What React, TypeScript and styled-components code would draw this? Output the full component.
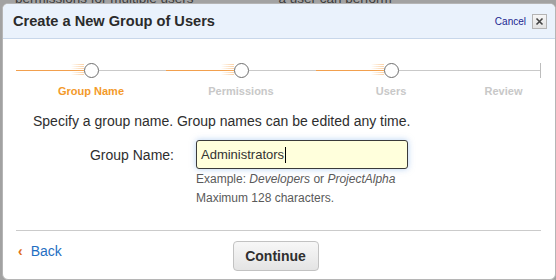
import React, { FC } from 'react';
import styled, { createGlobalStyle } from 'styled-components';

const GlobalStyle = createGlobalStyle`
  html, body {
    margin: 0;
    padding: 0;
    background: #a2a2a2;
    overflow: hidden;
  }
  body {
    font-family: 'Liberation Sans', Arial, sans-serif;
    width: 556px;
    height: 280px;
  }
`;

const Backdrop = styled.div`
  display: flex;
  gap: 85px;
  margin-top: -9px;
  padding-left: 15px;
  font-size: 13.5px;
  line-height: 15px;
  color: #3c3c3c;
  white-space: nowrap;
`;

const Dialog = styled.div`
  position: absolute;
  left: 2px;
  top: 3px;
  width: 552px;
  height: 275px;
  background: #fff;
  border: 1px solid #b5b5b5;
  border-radius: 6px;
  overflow: hidden;
  display: flex;
  flex-direction: column;
`;

const Header = styled.div`
  height: 34px;
  display: flex;
  align-items: center;
  justify-content: space-between;
  padding: 0 8px 0 10px;
  background: #eaf2fc;
  border-bottom: 1px solid #c8d7ea;
`;

const Title = styled.h1`
  margin: 0;
  font-size: 14.6px;
  font-weight: bold;
  color: #2b2b2b;
`;

const CancelWrap = styled.div`
  display: flex;
  align-items: center;
  gap: 6px;
`;

const CancelLink = styled.a`
  font-size: 10px;
  color: #1c2690;
  text-decoration: none;
`;

const CloseBox = styled.span`
  width: 13px;
  height: 13px;
  border: 1px solid #b4b4b4;
  background: linear-gradient(#f6f6f6, #e2e2e2);
  display: flex;
  align-items: center;
  justify-content: center;
`;

const Body = styled.div`
  padding: 0 14px 0 13px;
  display: flex;
  flex-direction: column;
`;

const Steps = styled.div`
  display: flex;
  margin-top: 24px;
`;

const Step = styled.div<{ $w: number }>`
  width: ${(p) => p.$w}px;
  display: flex;
  flex-direction: column;
  align-items: center;
`;

const Track = styled.div<{ $end?: boolean }>`
  width: 100%;
  height: 15px;
  display: flex;
  align-items: center;
  box-sizing: border-box;
  border-right: ${(p) => (p.$end ? '1px solid #bdbdbd' : 'none')};
`;

const Segment = styled.span<{ $lit: boolean }>`
  flex: 1;
  height: 1px;
  margin-top: -1px;
  background: ${(p) => (p.$lit ? '#f2a04e' : '#c9c9c9')};
`;

const Glow = styled.span`
  width: 13px;
  height: 12px;
  margin-left: -13px;
  margin-top: -1px;
  background: repeating-linear-gradient(
    to bottom,
    rgba(246, 170, 90, 0.5) 0,
    rgba(246, 170, 90, 0.5) 1px,
    rgba(255, 255, 255, 0) 1px,
    rgba(255, 255, 255, 0) 2px
  );
  -webkit-mask-image: linear-gradient(to right, transparent, #000 85%);
  mask-image: linear-gradient(to right, transparent, #000 85%);
`;

const Dot = styled.span`
  flex: none;
  width: 15px;
  height: 15px;
  box-sizing: border-box;
  border: 1.5px solid #6f6f6f;
  border-radius: 50%;
  background: #fff;
`;

const StepLabel = styled.div<{ $active: boolean }>`
  margin-top: 7px;
  font-size: 11px;
  line-height: 13px;
  font-weight: bold;
  color: ${(p) => (p.$active ? '#f39a2a' : '#c8c8c8')};
`;

const Instruction = styled.p`
  margin: 15px 0 0 17px;
  font-size: 14px;
  line-height: 17px;
  color: #2e2e2e;
`;

const FormGrid = styled.div`
  display: grid;
  grid-template-columns: 158px 212px;
  column-gap: 22px;
  margin-top: 10px;
  align-items: center;
`;

const FieldLabel = styled.label`
  justify-self: end;
  font-size: 14px;
  color: #2e2e2e;
`;

const TextInput = styled.div`
  height: 29px;
  box-sizing: border-box;
  border: 1px solid #3a3a3a;
  border-radius: 3px;
  background: #ffffdc;
  box-shadow: 0 0 6px rgba(120, 170, 230, 0.55);
  display: flex;
  align-items: center;
  padding-left: 4px;
  font-size: 13px;
  color: #333;
`;

const Caret = styled.span`
  width: 1px;
  height: 16px;
  background: #000;
  margin-left: 1px;
`;

const Hints = styled.div`
  grid-column: 2;
  margin-top: 1px;
  font-size: 12px;
  line-height: 19px;
  color: #5a5a5a;
`;

const Separator = styled.hr`
  margin: 22px 0 0;
  border: 0;
  border-top: 1px solid #cbcbcb;
`;

const Footer = styled.div`
  display: grid;
  grid-template-columns: 1fr auto 1fr;
  align-items: center;
  margin-top: 10px;
`;

const BackLink = styled.a`
  display: flex;
  align-items: center;
  gap: 8px;
  padding-left: 2px;
  margin-top: -10px;
  font-size: 14px;
  color: #1f6fc2;
  text-decoration: none;
`;

const Chevron = styled.span`
  font-weight: bold;
  font-size: 14px;
  color: #e0701a;
`;

const ContinueButton = styled.button`
  width: 86px;
  height: 30px;
  margin-right: 6px;
  border: 1px solid #c2c2c2;
  border-radius: 4px;
  background: linear-gradient(#f7f7f7, #e4e4e4);
  font-family: 'Liberation Sans', Arial, sans-serif;
  font-size: 14px;
  font-weight: bold;
  color: #2f2f2f;
`;

type StepDef = { label: string; w: number; lit: boolean; dot: boolean; end?: boolean };

const steps: StepDef[] = [
  { label: 'Group Name', w: 150, lit: true, dot: true },
  { label: 'Permissions', w: 150, lit: true, dot: true },
  { label: 'Users', w: 150, lit: true, dot: true },
  { label: 'Review', w: 75, lit: false, dot: false, end: true },
];

const App: FC = () => {
  return (
    <>
      <GlobalStyle />
      <Backdrop>
        <span>permissions for multiple users</span>
        <span>a user can perform</span>
      </Backdrop>
      <Dialog>
        <Header>
          <Title>Create a New Group of Users</Title>
          <CancelWrap>
            <CancelLink href="#">Cancel</CancelLink>
            <CloseBox>
              <svg width="9" height="9" viewBox="0 0 9 9">
                <path d="M1.5 1.5 L7.5 7.5 M7.5 1.5 L1.5 7.5" stroke="#444" strokeWidth="1.6" />
              </svg>
            </CloseBox>
          </CancelWrap>
        </Header>
        <Body>
          <Steps>
            {steps.map((s, i) => (
              <Step key={s.label} $w={s.w}>
                <Track $end={s.end}>
                  <Segment $lit={s.lit} />
                  {s.dot && <Glow />}
                  {s.dot && <Dot />}
                  <Segment $lit={false} />
                </Track>
                <StepLabel $active={i === 0}>{s.label}</StepLabel>
              </Step>
            ))}
          </Steps>
          <Instruction>Specify a group name. Group names can be edited any time.</Instruction>
          <FormGrid>
            <FieldLabel>Group Name:</FieldLabel>
            <TextInput>
              Administrators
              <Caret />
            </TextInput>
            <Hints>
              <div>
                Example: <i>Developers</i> or <i>ProjectAlpha</i>
              </div>
              <div>Maximum 128 characters.</div>
            </Hints>
          </FormGrid>
          <Separator />
          <Footer>
            <BackLink href="#">
              <Chevron>‹</Chevron>
              Back
            </BackLink>
            <ContinueButton>Continue</ContinueButton>
            <span />
          </Footer>
        </Body>
      </Dialog>
    </>
  );
};

export default App;
